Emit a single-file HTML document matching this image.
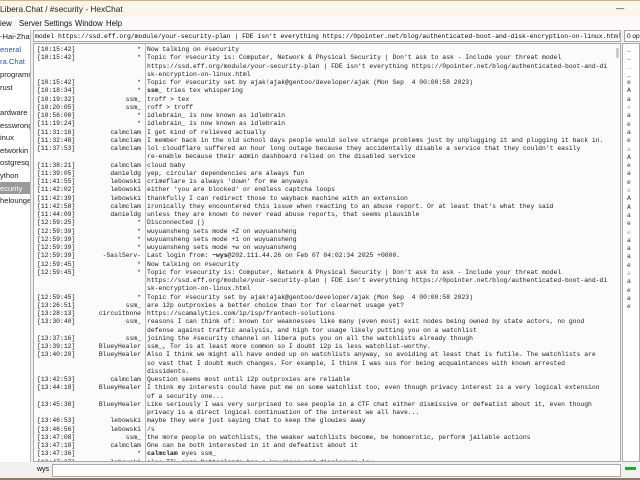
<!DOCTYPE html>
<html><head><meta charset="utf-8"><style>
*{margin:0;padding:0;box-sizing:border-box}
body{width:640px;height:480px;overflow:hidden;background:#f0f0f0;font-family:"Liberation Sans",sans-serif;position:relative}
.a{position:absolute;white-space:pre}
#title{left:0;top:0;width:640px;height:17px;background:#fdf6ea;border-top:1px solid #e0b070;font-size:8.3px;color:#222;padding:3px 0 0 0}
#menu{left:0;top:17px;width:640px;height:13px;background:#fbfbfb;font-size:7.8px;color:#111}
#topic{left:33px;top:30px;width:588px;height:12px;background:#fff;border:1px solid #aaa;font:6.4px "Liberation Mono",monospace;padding:2px 0 0 1px;overflow:hidden}
#ops{left:624px;top:30px;width:20px;height:12px;background:#fff;border:1px solid #aaa;font-size:6.5px;padding:2px 0 0 2px}
#tree{left:0;top:30px;width:31px;height:432px;background:#fff;border-right:1px solid #bbb;font-size:7.6px;color:#222;overflow:hidden}
#chat{left:33px;top:43px;width:588px;height:419px;background:#fbfbfb;border:1px solid #aaa;overflow:hidden}
#sep{left:111px;top:0;width:1px;height:419px;background:#bbb}
.l{position:absolute;left:0;height:8.25px;font:6.4px/8.25px "Liberation Mono",monospace;color:#1a1a1a;white-space:pre}
.t{position:absolute;left:3px}
.n{position:absolute;right:479px;text-align:right}
.m{position:absolute;left:113px}
#users{left:622px;top:43px;width:18px;height:419px;background:#fff;border:1px solid #aaa;font:6.4px/8.3px "Liberation Mono",monospace;color:#333;padding:2px 0 0 4px}
#input{left:0;top:462px;width:640px;height:16px;background:#f0f0f0}
#bot{left:0;top:478px;width:640px;height:2px;background:#8a7a6a}
</style></head><body>
<div class="a" id="title">Libera.Chat / #security - HexChat<span class="a" style="left:616px;top:2px">—</span></div>
<div class="a" id="menu"><span class="a" style="left:0;top:2px">iew</span><span class="a" style="left:19px;top:2px">Server</span><span class="a" style="left:44px;top:2px">Settings</span><span class="a" style="left:75px;top:2px">Window</span><span class="a" style="left:106px;top:2px">Help</span></div>
<div class="a" id="topic">model https://ssd.eff.org/module/your-security-plan | FDE isn't everything https://0pointer.net/blog/authenticated-boot-and-disk-encryption-on-linux.html</div>
<div class="a" id="ops">0 op</div>
<div class="a" id="tree">
<span class="a" style="left:0;top:2px">-Hai-Zhao</span>
<span class="a" style="left:0;top:15px;color:#2a5ab0">eneral</span>
<span class="a" style="left:0;top:27px;color:#2a5ab0">ra.Chat</span>
<span class="a" style="left:0;top:40px">programm</span>
<span class="a" style="left:0;top:53px">rust</span>
<span class="a" style="left:0;top:78px">ardware</span>
<span class="a" style="left:0;top:91px">esswrong</span>
<span class="a" style="left:0;top:103px">inux</span>
<span class="a" style="left:0;top:116px">etworkin</span>
<span class="a" style="left:0;top:128px">ostgresq</span>
<span class="a" style="left:0;top:141px">ython</span>
<span class="a" style="left:0;top:152px;width:30px;height:12px;background:#9a9a9a;color:#fff;padding-top:2px">ecurity</span>
<span class="a" style="left:0;top:166px">helounge</span>
</div>
<div class="a" id="chat">
<div class="a" id="sep"></div>
<div class="a" style="left:582px;top:4px;width:3px;height:10px;background:#ccc"></div>
<div id="lines"></div>
</div>
<div class="a" id="users"></div>
<div class="a" id="input"><span class="a" style="left:37px;top:4px;font-size:7px">wys</span><div class="a" style="left:52px;top:2px;width:569px;height:13px;background:#fff;border:1px solid #aaa"></div><div class="a" style="left:625px;top:5px;width:11px;height:3px;background:#1bb11b"></div></div>
<div class="a" id="bot"></div>
<script>
var T="Topic for #security is: Computer, Network & Physical Security | Don't ask to ask - Include your threat model",
U="https://ssd.eff.org/module/your-security-plan | FDE isn't everything https://0pointer.net/blog/authenticated-boot-and-di",
S="sk-encryption-on-linux.html";
var L=[
["[10:15:42]","*","Now talking on #security"],
["[10:15:42]","*",T],["","",U],["","",S],
["[10:15:42]","*","Topic for #security set by ajak!ajak@gentoo/developer/ajak (Mon Sep  4 00:00:58 2023)"],
["[10:18:34]","*","<b>ssm_</b> tries tex whispering"],
["[10:19:32]","ssm_","troff > tex"],
["[10:20:05]","ssm_","roff > troff"],
["[10:56:00]","*","idlebrain_ is now known as idlebrain"],
["[11:19:24]","*","idlebrain_ is now known as idlebrain"],
["[11:31:16]","calmclam","I get kind of relieved actually"],
["[11:32:48]","calmclam","I member back in the old school days people would solve strange problems just by unplugging it and plugging it back in."],
["[11:37:53]","calmclam","lol cloudflare suffered an hour long outage because they accidentally disable a service that they couldn't easily"],
["","","re-enable because their admin dashboard relied on the disabled service"],
["[11:38:21]","calmclam","cloud baby"],
["[11:39:05]","danieldg","yep, circular dependencies are always fun"],
["[11:41:55]","lebowski","crimeflare is always 'down' for me anyways"],
["[11:42:02]","lebowski","either 'you are blocked' or endless captcha loops"],
["[11:42:39]","lebowski","thankfully I can redirect those to wayback machine with an extension"],
["[11:42:58]","calmclam","ironically they encountered this issue when reacting to an abuse report. Or at least that's what they said"],
["[11:44:09]","danieldg","unless they are known to never read abuse reports, that seems plausible"],
["[12:59:25]","*","Disconnected ()"],
["[12:59:39]","*","wuyuansheng sets mode +Z on wuyuansheng"],
["[12:59:39]","*","wuyuansheng sets mode +i on wuyuansheng"],
["[12:59:39]","*","wuyuansheng sets mode +w on wuyuansheng"],
["[12:59:39]","-SaslServ-","Last login from: <b>~wys</b>@202.111.44.26 on Feb 07 04:02:34 2025 +0000."],
["[12:59:45]","*","Now talking on #security"],
["[12:59:45]","*",T],["","",U],["","",S],
["[12:59:45]","*","Topic for #security set by ajak!ajak@gentoo/developer/ajak (Mon Sep  4 00:00:58 2023)"],
["[13:26:51]","ssm_","are i2p outproxies a better choice than tor for clearnet usage yet?"],
["[13:28:13]","circuitbone","https://scamalytics.com/ip/isp/frantech-solutions"],
["[13:30:40]","ssm_","reasons I can think of: known tor weaknesses like many (even most) exit nodes being owned by state actors, no good"],
["","","defense against traffic analysis, and high tor usage likely putting you on a watchlist"],
["[13:37:16]","ssm_","joining the #security channel on libera puts you on all the watchlists already though"],
["[13:39:12]","BlueyHealer","ssm_, Tor is at least more common so I doubt i2p is less watchlist-worthy."],
["[13:40:20]","BlueyHealer","Also I think we might all have ended up on watchlists anyway, so avoiding at least that is futile. The watchlists are"],
["","","so vast that I doubt much changes. For example, I think I was sus for being acquaintances with known arrested"],
["","","dissidents."],
["[13:42:53]","calmclam","Question seems most until i2p outproxies are reliable"],
["[13:44:18]","BlueyHealer","I think my interests could have put me on some watchlist too, even though privacy interest is a very logical extension"],
["","","of a security one..."],
["[13:45:38]","BlueyHealer","Like seriously I was very surprised to see people in a CTF chat either dismissive or defeatist about it, even though"],
["","","privacy is a direct logical continuation of the interest we all have..."],
["[13:46:53]","lebowski","maybe they were just saying that to keep the glowies away"],
["[13:46:56]","lebowski","/s"],
["[13:47:08]","ssm_","the more people on watchlists, the weaker watchlists become, be homoerotic, perform jailable actions"],
["[13:47:10]","calmclam","One can be both interested in it and defeatist about it"],
["[13:47:36]","*","<b>calmclam</b> eyes ssm_"],
["[13:47:37]","lebowski","also TIL even Netherlands has a key/password disclosure law"]];
var h="";
L.forEach(function(r,i){h+='<div class="l" style="top:'+(2+i*8.25)+'px;width:586px"><span class="t">'+r[0]+'</span><span class="n">'+r[1]+'</span><span class="m">'+r[2]+'</span></div>';});
document.getElementById("lines").innerHTML=h;
var u="____eAaeaeaeaAeaeaAAaeeaaaeaaeae".split(""),g="";
u.forEach(function(c,i){g+='<div style="color:'+((i%5==2)?'#aaa':'#333')+'">'+c+'</div>';});
document.getElementById("users").innerHTML=g;
</script>
</body></html>
